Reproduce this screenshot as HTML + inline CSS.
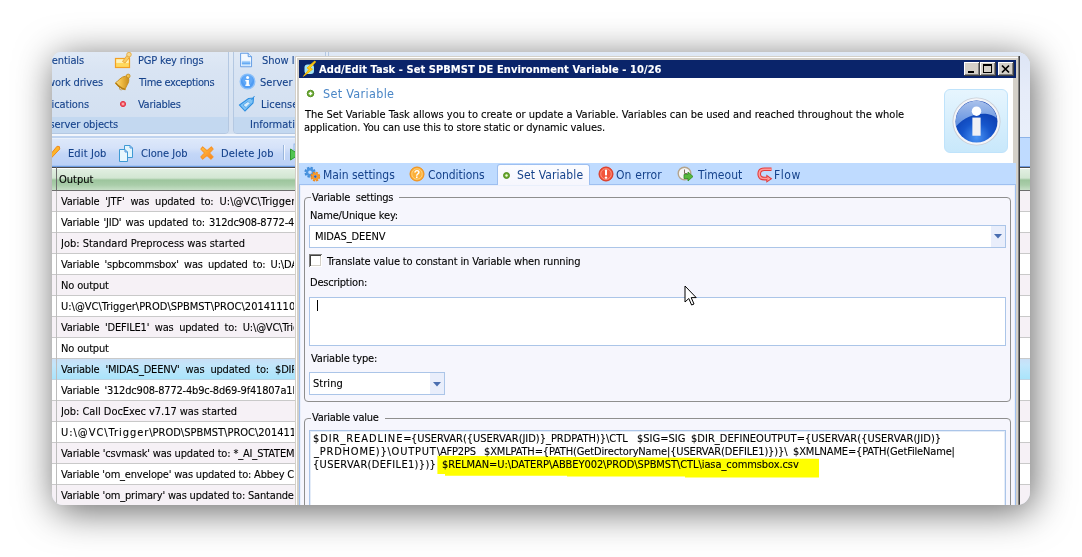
<!DOCTYPE html>
<html>
<head>
<meta charset="utf-8">
<title>Add/Edit Task - Set Variable</title>
<style>
html,body{margin:0;padding:0;background:#fff;}
body{width:1082px;height:557px;overflow:hidden;position:relative;
  font-family:"DejaVu Sans Condensed","Liberation Sans",sans-serif;font-size:11px;color:#000;}
*{box-sizing:border-box;}
.abs{position:absolute;}
.t{position:absolute;white-space:pre;line-height:16px;height:15px;-webkit-text-stroke:.1px currentColor;}
/* the screenshot card: abs origin (52,52) */
#shot{will-change:transform;position:absolute;left:52px;top:52px;width:978px;height:453px;border-radius:9px 14px 13px 11px;overflow:hidden;
  background:#dbe6f4;box-shadow:3px 6px 38px 0 rgba(0,0,0,.61);}
/* everything inside uses coords relative to shot: x-52, y-52 */
#ribbon{left:0;top:0;width:978px;height:82px;background:linear-gradient(#e3ebf6 0,#dbe6f4 20px,#d5e1f1 64px);}
.rgroup{position:absolute;top:-4px;height:86px;border:1px solid #b4c8e2;border-radius:4px;background:linear-gradient(#e1eaf6 0,#d9e4f3 22px,#d3e0f1 68px);}
.rlabel{position:absolute;left:0;right:0;bottom:0;height:16px;background:#c3d8f0;border-radius:0 0 3px 3px;}
.rb{color:#15428b;}
#tbar{left:0;top:86px;width:978px;height:29px;background:linear-gradient(#dde8fa 0,#d5e2f9 9px,#c3d6f7 15px,#bbd0f6 27px);border-top:1px solid #eaf1fb;border-bottom:1px solid #6e9be0;box-shadow:inset 0 -1px 0 #a9c6f2;}
#ghead{left:0;top:115px;width:978px;height:24px;border-top:1px solid #4c4c4c;border-bottom:1px solid #6d6d6d;
  background:linear-gradient(#fff 0,#fff 1px,#e2efe2 1px,#d2e6d2 10px,#9dc59d 12px,#a9cda9 17px,#c6dfc6 22px);}
.row{position:absolute;left:0;width:978px;height:21px;border-bottom:1px solid #c9c9c9;background:#fff;}
.row.alt{background:#f6f1f6;}
.row.sel{background:linear-gradient(#c9dff6 0,#c3e6fb 6px,#a9e4fb 20px);border-bottom-color:#c0d4e2;}
.row .t{left:9px;top:3px;width:233px;overflow:hidden;}
#colsep{left:4px;top:139px;width:1px;height:320px;background:#bcbcbc;}
/* dialog */
#dlg{left:243px;top:4px;width:725px;height:460px;background:#d4d0c8;border-left:1px solid #d4d0c8;border-top:1px solid #d4d0c8;
  box-shadow:inset 1px 1px 0 #fff;}
#title{left:247px;top:8px;width:717px;height:18px;background:#0a246a;color:#fff;font-weight:bold;}
.cbtn{position:absolute;top:2px;width:16px;height:14px;background:#d4d0c8;
  box-shadow:inset -1px -1px 0 #404040,inset 1px 1px 0 #fff,inset -2px -2px 0 #808080;}
#hdr{left:247px;top:26px;width:714px;height:85px;background:#fff;}
#tabs{left:247px;top:111px;width:717px;height:21px;background:#bfdbff;}
#page{left:247px;top:132px;width:717px;height:330px;background:#f6f6fd;border:1px solid #9ebff0;border-bottom:none;
  box-shadow:inset 1px 1px 0 #e9effb, inset -1px 0 0 #e9effb;}
#tabsel{left:445px;top:112px;width:93px;height:21px;background:linear-gradient(#fbfcff,#f6f6fd);border:1px solid #9ebff0;border-bottom:none;border-radius:3px 3px 0 0;}
.tab{color:#15428b;font-size:12px;margin-left:-1px;margin-top:0px;-webkit-text-stroke:0;}
.gb{position:absolute;border:1px solid #8e8e8e;border-radius:4px;}
.gbl{position:absolute;background:#f6f6fd;padding:0 0 0 0;}
.inp{position:absolute;background:#fff;border:1px solid #abc5e8;}
</style>
</head>
<body>
<div id="shot">
  <!-- ===== background application ===== -->
  <div id="ribbon" class="abs">
    <div class="rgroup" style="left:-12px;width:189px;"><div class="rlabel"></div></div>
    <div class="rgroup" style="left:181px;width:93px;"><div class="rlabel"></div></div>
    <div class="rgroup" style="left:276px;width:800px;"><div class="rlabel"></div></div>
    <span id="t1" class="t rb" style="right:946px;top:1px;letter-spacing:-.12px;">Credentials</span>
    <span id="t2" class="t rb" style="right:927px;top:23px;letter-spacing:-.12px;">Network drives</span>
    <span id="t3" class="t rb" style="right:941px;top:45px;letter-spacing:-.12px;">Notifications</span>
    <span id="t4" class="t rb" style="right:912px;top:65px;letter-spacing:-.12px;">Global server objects</span>
    <span id="t5" class="t rb" style="left:86px;top:1px;letter-spacing:-0.18px;">PGP key rings</span>
    <span id="t6" class="t rb" style="left:87px;top:23px;letter-spacing:-0.37px;">Time exceptions</span>
    <span id="t7" class="t rb" style="left:86px;top:45px;letter-spacing:-0.29px;">Variables</span>
    <span id="t8" class="t rb" style="left:210px;top:1px;">Show log</span>
    <span id="t9" class="t rb" style="left:208px;top:23px;">Server info</span>
    <span id="t10" class="t rb" style="left:209px;top:45px;">License</span>
    <span id="t11" class="t rb" style="left:198px;top:65px;">Information</span>
    <!-- icons -->
    <svg class="abs" style="left:62px;top:-1px" width="18" height="18" viewBox="0 0 18 18">
      <rect x="1.500" y="7.500" width="14" height="9" fill="#ffd95e" stroke="#f2a024" stroke-width="1.200"/>
      <rect x="2.300" y="8.300" width="12.400" height="3.600" fill="#fff3bc"/>
      <path d="M8.500 10.500 L13.200 4.200 L15.800 6 L11 12 Z" fill="#f8cc62" stroke="#e6a030" stroke-width=".8"/>
      <circle cx="15" cy="3.600" r="2.300" fill="#f6d88e" stroke="#e2a43a" stroke-width=".8"/>
    </svg>
    <svg class="abs" style="left:62px;top:21px" width="18" height="18" viewBox="0 0 18 18">
      <defs><linearGradient id="bg" x1="0" y1="0" x2="1" y2="0"><stop offset="0" stop-color="#fbe08a"/><stop offset=".45" stop-color="#f0bc44"/><stop offset="1" stop-color="#c98e1e"/></linearGradient></defs>
      <circle cx="7.200" cy="15" r="1.900" fill="#f6ecd2" stroke="#a88a4a" stroke-width=".7"/>
      <path d="M11.500 3.200 C7 3.500 4.500 8 1.200 10 C3.500 13.500 7.500 16 11.200 16.800 C11.500 13 16 10 14.500 5 Z" fill="url(#bg)" stroke="#c48a1a" stroke-width=".9" stroke-linejoin="round"/>
      <path d="M2 10.200 C4.500 13.500 7.500 15.300 10.800 16.200" fill="none" stroke="#b07a14" stroke-width="1.300"/>
      <circle cx="14.200" cy="3" r="1.900" fill="#f2c450" stroke="#c48a1a" stroke-width=".8"/>
    </svg>
    <svg class="abs" style="left:66px;top:47px" width="10" height="10" viewBox="0 0 10 10">
      <circle cx="5" cy="5" r="2.6" fill="#f2606c" stroke="#e23446" stroke-width="1"/>
      <circle cx="5" cy="5" r="1" fill="#fbb"/>
    </svg>
    <svg class="abs" style="left:187px;top:0px" width="15" height="16" viewBox="0 0 17 19">
      <path d="M1.5 1.5 H10.5 L14.5 5.5 V17.5 H1.5 Z" fill="#f4f9ff" stroke="#4f8fe0"/>
      <rect x="3" y="10.5" width="10" height="5.5" fill="#a9d2fb"/>
      <rect x="3" y="12.5" width="10" height="1.6" fill="#5ea6f2"/>
      <path d="M10.5 1.5 V5.5 H14.5" fill="#dcecff" stroke="#4f8fe0"/>
    </svg>
    <svg class="abs" style="left:187px;top:21px" width="17" height="17" viewBox="0 0 17 17">
      <circle cx="8.5" cy="8.5" r="7.3" fill="#4f9cf4" stroke="#8cc0fa" stroke-width="1.4"/>
      <circle cx="8.5" cy="6.5" r="5.2" fill="#6cb0fa" opacity=".6"/>
      <rect x="7.3" y="7" width="2.6" height="5.4" fill="#fff"/>
      <rect x="6.3" y="7" width="3" height="1.3" fill="#fff"/>
      <rect x="6.3" y="11.6" width="4.6" height="1.3" fill="#fff"/>
      <circle cx="8.6" cy="4.4" r="1.5" fill="#fff"/>
    </svg>
    <svg class="abs" style="left:186px;top:42px" width="19" height="19" viewBox="0 0 19 19">
      <path d="M1.5 11 L10.5 4.5 L15.5 4 L15 9 L7 17 Z" fill="#7ec3f6" stroke="#2f8fe0" stroke-width="1.1"/>
      <path d="M5 11 L10 7.5 L12 9.5 L8 13.5 Z" fill="#d8eefc" stroke="#3f97e4" stroke-width=".7"/>
      <path d="M13.5 6 L16.5 2" stroke="#2f8fe0" stroke-width="1"/>
    </svg>
  </div>
  <div class="abs" style="left:0;top:82px;width:978px;height:2px;background:#f2f6fc;"></div>
  <div class="abs" style="left:0;top:84px;width:978px;height:2px;background:#bfd3ef;"></div>
  <div id="tbar" class="abs">
    <span id="t12" class="t rb" style="left:16px;top:7px;letter-spacing:0.12px;">Edit Job</span>
    <span id="t13" class="t rb" style="left:89px;top:7px;">Clone Job</span>
    <span id="t14" class="t rb" style="left:169px;top:7px;letter-spacing:0.18px;">Delete Job</span>
    <div class="abs" style="left:231px;top:6px;width:1px;height:15px;background:#9ab6dc;box-shadow:1px 0 0 #f2f7fe;"></div>
    <svg class="abs" style="left:0px;top:-1px" width="12" height="24" viewBox="0 0 12 24">
      <path d="M-1 15.800 L5 8.300 L7.300 8.500 L7.800 11 L-1 20.300 Z" fill="#fdb528" stroke="#f08a1e" stroke-width="1" stroke-linejoin="round"/>
    </svg>
    <svg class="abs" style="left:66px;top:5px" width="17" height="19" viewBox="0 0 17 19">
      <path d="M6.5 1.5 H12 L14.5 4 V13.5 H6.5 Z" fill="#e2f5fc" stroke="#3f9ad4"/>
      <path d="M1.5 5.5 H7 L9.5 8 V17.5 H1.5 Z" fill="#e8f7fd" stroke="#3f9ad4"/>
      <path d="M7 5.5 V8 H9.5" fill="none" stroke="#4f93dc"/>
      <path d="M12 1.5 V4 H14.5" fill="none" stroke="#4f93dc"/>
    </svg>
    <svg class="abs" style="left:147.500px;top:7px" width="14" height="14" viewBox="0 0 16 16">
      <defs><linearGradient id="xg" x1="0" y1="0" x2="1" y2="1"><stop offset="0" stop-color="#ffc83c"/><stop offset=".5" stop-color="#fda22e"/><stop offset="1" stop-color="#f88420"/></linearGradient></defs>
      <path d="M3 1 L8 5.200 L13 1 L15 3.500 L10.800 8 L15 12.500 L12.500 15 L8 10.800 L3 15 L1 12.500 L5.200 8 L1 3.500 Z" fill="url(#xg)" stroke="#f79428" stroke-width="1.200" stroke-linejoin="round"/>
    </svg>
    <svg class="abs" style="left:237px;top:4px" width="12" height="20" viewBox="0 0 12 20">
      <path d="M1.5 6 L10 11.5 L1.5 17 Z" fill="#52c552" stroke="#2e9a2e"/>
      <rect x="5" y="1" width="6" height="6" fill="#cfe3fb" stroke="#86aee2" stroke-width=".8"/>
    </svg>
  </div>
  <div id="ghead" class="abs"><span id="t15" class="t" style="left:7px;top:4px;">Output</span></div>
  <div id="rows">
    <div class="row alt" style="top:139px"><span id="t16" class="t" style="word-spacing:3.016px;letter-spacing:-.2px;">Variable 'JTF' was updated to: <span style="letter-spacing:.08px">U:\@VC\Trigger</span>\PROD</span></div>
    <div class="row" style="top:160px"><span id="t17" class="t" style="letter-spacing:-.2px;word-spacing:1.178px;">Variable 'JID' was updated to: 312dc908-8772-4b9c</span></div>
    <div class="row alt" style="top:181px"><span id="t18" class="t" style="letter-spacing:-0.017px;">Job: Standard Preprocess was started</span></div>
    <div class="row" style="top:202px"><span id="t19" class="t" style="word-spacing:2.206px;letter-spacing:-.2px;">Variable 'spbcommsbox' was updated to: U:\DATERP</span></div>
    <div class="row alt" style="top:223px"><span id="t20" class="t" style="letter-spacing:-0.156px;">No output</span></div>
    <div class="row" style="top:244px"><span id="t21" class="t">U:\@VC\Trigger\PROD\SPBMST\PROC\20141110</span></div>
    <div class="row alt" style="top:265px"><span id="t22" class="t" style="word-spacing:2.680px;letter-spacing:-.2px;">Variable 'DEFILE1' was updated to: U:\@VC\Trigger</span></div>
    <div class="row" style="top:286px"><span id="t23" class="t" style="letter-spacing:-0.156px;">No output</span></div>
    <div class="row sel" style="top:307px"><span id="t24" class="t" style="word-spacing:3.171px;letter-spacing:-.2px;">Variable 'MIDAS_DEENV' was updated to: $DIR_READLINE</span></div>
    <div class="row" style="top:328px"><span id="t25" class="t" style="letter-spacing:-.2px;word-spacing:2.088px;">Variable '312dc908-8772-4b9c-8d69-9f41807a1b</span></div>
    <div class="row alt" style="top:349px"><span id="t26" class="t" style="letter-spacing:-0.050px;">Job: Call DocExec v7.17 was started</span></div>
    <div class="row" style="top:370px"><span id="t27" class="t"><span style="letter-spacing:.96px">U:\@VC\Trigger</span>\PROD\SPBMST\PROC\20141110</span></div>
    <div class="row alt" style="top:391px"><span id="t28" class="t" style="letter-spacing:-0.157px;">Variable 'csvmask' was updated to: *_AI_STATEMENT</span></div>
    <div class="row" style="top:412px"><span id="t29" class="t" style="letter-spacing:-0.202px;">Variable 'om_envelope' was updated to: Abbey C5</span></div>
    <div class="row alt" style="top:433px"><span id="t30" class="t" style="letter-spacing:-0.190px;">Variable 'om_primary' was updated to: Santander</span></div>
  </div>
  <div class="abs" style="left:968px;top:0;width:10px;height:85px;background:linear-gradient(#dde5f5,#e6ecf9 40px,#e9effa);"></div>
  <div class="abs" style="left:968px;top:85px;width:10px;height:30px;background:#bfdbff;border-top:1px solid #8eb4e8;border-bottom:1px solid #6e9be0;"></div>
  <div id="colsep" class="abs"></div>
  <div class="abs" style="left:4px;top:115px;width:1px;height:24px;background:#6d6d6d;"></div>
  <!-- ===== dialog ===== -->
  <div id="dlg" class="abs"></div>
  <div class="abs" style="left:966px;top:4px;width:1px;height:460px;background:#808080;"></div>
  <div class="abs" style="left:967px;top:4px;width:1px;height:460px;background:#404040;"></div>
  <div id="title" class="abs">
    <svg class="abs" style="left:2px;top:0px" width="16" height="18" viewBox="0 0 16 18">
      <rect x="3.500" y="4.500" width="9.500" height="9.500" rx="3" fill="#9fe0f4"/>
      <path d="M13.800 1 L6 8 L8.300 9 L2.500 16.300 L11.500 9.200 L9 8 L14.500 2 Z" fill="#ffd21e" stroke="#f4b800" stroke-width="1" stroke-linejoin="round"/>
    </svg>
    <span id="t31" class="t" style="left:20px;top:2px;letter-spacing:0.07px;">Add/Edit Task - Set SPBMST DE Environment Variable - 10/26</span>
    <div class="cbtn" style="left:665px;"><div class="abs" style="left:4px;top:9px;width:6px;height:2px;background:#000"></div></div>
    <div class="cbtn" style="left:681px;"><div class="abs" style="left:3px;top:2px;width:9px;height:9px;border:1px solid #000;border-top-width:2px"></div></div>
    <div class="cbtn" style="left:699px;"><svg class="abs" style="left:3px;top:2px" width="10" height="10" viewBox="0 0 10 10"><path d="M1 1.5 L8 8.5 M8 1.5 L1 8.5" stroke="#000" stroke-width="1.7"/></svg></div>
  </div>
  <div id="hdr" class="abs">
    <svg class="abs" style="left:6px;top:10px" width="11" height="11" viewBox="0 0 11 11">
      <circle cx="5.5" cy="5.5" r="3.3" fill="#6aa82e" stroke="#4c8a1c" stroke-width=".9"/>
      <path d="M5.5 3.700 V7.300 M3.700 5.500 H7.300" stroke="#fff" stroke-width="1.400"/>
    </svg>
    <span id="t32" class="t" style="left:24px;top:8px;font-size:12.5px;line-height:16px;height:16px;color:#4a86c6;letter-spacing:0.32px;-webkit-text-stroke:0;">Set Variable</span>
    <span id="t33" class="t" style="left:6px;top:29px;letter-spacing:-0.02px;">The Set Variable Task allows you to create or update a Variable. Variables can be used and reached throughout the whole</span>
    <span id="t34" class="t" style="left:5px;top:42px;letter-spacing:-0.13px;">application. You can use this to store static or dynamic values.</span>
    <!-- info icon -->
    <div class="abs" style="left:645px;top:11px;width:64px;height:64px;border-radius:6px;border:1px solid #bfe3fb;background:linear-gradient(#e6f5fe,#c8e8fb);"></div>
    <svg class="abs" style="left:651.500px;top:17.500px" width="51" height="51" viewBox="0 0 52 52">
      <defs>
        <radialGradient id="ig" cx="50%" cy="88%" r="70%"><stop offset="0" stop-color="#4a94f4"/><stop offset=".5" stop-color="#1656cc"/><stop offset="1" stop-color="#0c3cae"/></radialGradient>
        <linearGradient id="ih" x1="0" y1="0" x2="0" y2="1"><stop offset="0" stop-color="#c4d8f6"/><stop offset="1" stop-color="#6a9ae6"/></linearGradient>
      </defs>
      <circle cx="26" cy="26" r="24.500" fill="#c9ced6"/>
      <circle cx="26" cy="26" r="23.600" fill="#f4f5f8"/>
      <circle cx="26" cy="26" r="21.400" fill="url(#ig)"/>
      <path d="M5 29 A21 21 0 0 1 46.800 23 C40 15 18 16 5 31 Z" fill="url(#ih)" opacity=".85"/>
      <circle cx="26" cy="15.500" r="4.800" fill="#fff"/>
      <rect x="21.800" y="22" width="8.400" height="18.500" fill="#f0f0f4"/>
    </svg>
  </div>
  <div id="tabs" class="abs"></div>
  <div id="page" class="abs"></div>
  <div id="tabsel" class="abs"></div>
  <div id="tablabels" class="abs" style="left:247px;top:111px;width:717px;height:22px;">
    <span id="t35" class="t tab" style="left:25px;top:4px;letter-spacing:-0.04px;">Main settings</span>
    <span id="t36" class="t tab" style="left:130px;top:4px;letter-spacing:-0.06px;">Conditions</span>
    <span id="t37" class="t tab" style="left:219px;top:4px;letter-spacing:0.12px;">Set Variable</span>
    <span id="t38" class="t tab" style="left:318px;top:4px;letter-spacing:0.12px;">On error</span>
    <span id="t39" class="t tab" style="left:400px;top:4px;letter-spacing:0.03px;">Timeout</span>
    <span id="t40" class="t tab" style="left:476px;top:4px;letter-spacing:0.53px;">Flow</span>
    <!-- gear -->
    <svg class="abs" style="left:5px;top:3px" width="17" height="16" viewBox="0 0 17 16">
      <circle cx="6" cy="6.2" r="4.1" fill="none" stroke="#3f8ad8" stroke-width="3" stroke-dasharray="2.1 1.12"/>
      <circle cx="6" cy="6.2" r="3" fill="none" stroke="#4a94e0" stroke-width="2.4"/>
      <circle cx="11.300" cy="10.600" r="3.500" fill="none" stroke="#f08a1c" stroke-width="2.800" stroke-dasharray="1.900 .85"/>
      <circle cx="11.300" cy="10.600" r="2.500" fill="none" stroke="#f59a2c" stroke-width="2.200"/>
      <circle cx="11.300" cy="10.600" r="1.300" fill="#2f62b8"/>
    </svg>
    <!-- question -->
    <svg class="abs" style="left:110px;top:3px" width="16" height="16" viewBox="0 0 16 16">
      <circle cx="8" cy="8" r="7" fill="#fbb03a" stroke="#f08c14" stroke-width="1"/>
      <circle cx="8" cy="8" r="5.2" fill="none" stroke="#fdd58c" stroke-width=".8"/>
      <text x="8" y="12" font-family="Liberation Sans, sans-serif" font-weight="bold" font-size="10.5" text-anchor="middle" fill="#fff">?</text>
    </svg>
    <!-- green dot -->
    <svg class="abs" style="left:203px;top:8px" width="9" height="9" viewBox="0 0 9 9">
      <circle cx="4.5" cy="4.5" r="3" fill="#6aa82e" stroke="#4c8a1c" stroke-width=".9"/>
      <circle cx="4.500" cy="4.500" r="1.200" fill="#f4ffe0"/>
    </svg>
    <!-- error -->
    <svg class="abs" style="left:299px;top:3px" width="16" height="16" viewBox="0 0 16 16">
      <circle cx="8" cy="8" r="7" fill="#f2553c" stroke="#d8341e" stroke-width="1"/>
      <circle cx="8" cy="8" r="5.300" fill="none" stroke="#f9a090" stroke-width=".8"/>
      <rect x="7" y="3.500" width="2" height="6" rx=".8" fill="#fff"/>
      <circle cx="8" cy="11.600" r="1.200" fill="#fff"/>
    </svg>
    <!-- timeout -->
    <svg class="abs" style="left:378px;top:3px" width="17" height="17" viewBox="0 0 17 17">
      <circle cx="7.500" cy="7.500" r="6.300" fill="#f4f4f4" stroke="#b4a48c" stroke-width="1.400"/>
      <path d="M7.500 3.500 V7.500 H10.500" stroke="#7d6f5c" stroke-width="1" fill="none"/>
      <path d="M7 8.500 H11 V6 L16 10.500 L11 15 V12.500 H7 Z" fill="#58b83c" stroke="#2f8c1e" stroke-width=".8"/>
    </svg>
    <!-- flow -->
    <svg class="abs" style="left:458px;top:3px" width="16" height="17" viewBox="0 0 16 17">
      <path d="M14.500 3.200 H7.500 C3.500 3.200 2.200 5.300 2.200 8 C2.200 10.800 3.700 12.600 7.500 12.600 H10" fill="none" stroke="#e23a3a" stroke-width="3.600"/>
      <path d="M9.300 8.600 L15.300 12.800 L9.300 16.800 Z" fill="#e23a3a"/>
      <path d="M14.500 3.200 H7.500 C3.500 3.200 2.200 5.300 2.200 8 C2.200 10.800 3.700 12.600 7.500 12.600 H10.500" fill="none" stroke="#ff9a9a" stroke-width="1.500"/>
      <path d="M10.300 10.600 L13.500 12.800 L10.300 14.900 Z" fill="#ff9a9a"/>
    </svg>
  </div>
  <div id="form" class="abs" style="left:247px;top:132px;width:717px;height:330px;">
    <div class="gb" style="left:5px;top:13px;width:707px;height:205px;"></div>
    <span id="t41" class="t gbl" style="left:12px;top:6px;padding:0 6px 0 1px;letter-spacing:-0.25px;">Variable  settings</span>
    <span id="t42" class="t" style="left:11px;top:24px;letter-spacing:-0.15px;">Name/Unique key:</span>
    <div class="inp" style="left:10px;top:41px;width:697px;height:23px;">
      <span id="t43" class="t" style="left:5px;top:3px;letter-spacing:-0.06px;">MIDAS_DEENV</span>
      <div class="abs" style="right:0;top:0;width:14px;height:21px;background:#e9eefb;"></div>
      <svg class="abs" style="right:3px;top:8px" width="8" height="5" viewBox="0 0 8 5"><path d="M0 0 H8 L4 4.500 Z" fill="#4a6eb0"/></svg>
    </div>
    <div class="abs" style="left:10px;top:70px;width:13px;height:13px;background:#fff;box-shadow:inset 1px 1px 0 #808080,inset -1px -1px 0 #fff,inset 2px 2px 0 #404040,inset -2px -2px 0 #d4d0c8;"></div>
    <span id="t44" class="t" style="left:28px;top:70px;letter-spacing:-0.14px;">Translate value to constant in Variable when running</span>
    <span id="t45" class="t" style="left:11px;top:91px;letter-spacing:-0.22px;">Description:</span>
    <div class="inp" style="left:10px;top:113px;width:697px;height:49px;">
      <div class="abs" style="left:7px;top:2px;width:1px;height:11px;background:#000;"></div>
    </div>
    <span id="t46" class="t" style="left:12px;top:167px;letter-spacing:-0.17px;">Variable type:</span>
    <div class="inp" style="left:10px;top:188px;width:136px;height:23px;">
      <span id="t47" class="t" style="left:3px;top:3px;letter-spacing:0.04px;">String</span>
      <div class="abs" style="right:0;top:0;width:14px;height:21px;background:#e9eefb;"></div>
      <svg class="abs" style="right:3px;top:9px" width="8" height="5" viewBox="0 0 8 5"><path d="M0 0 H8 L4 4.500 Z" fill="#4a6eb0"/></svg>
    </div>
    <div class="gb" style="left:5px;top:234px;width:707px;height:120px;"></div>
    <span id="t48" class="t gbl" style="left:12px;top:226px;padding:0 6px 0 1px;letter-spacing:-0.26px;">Variable value</span>
    <div class="inp" style="left:10px;top:246px;width:697px;height:100px;box-shadow:inset 0 0 0 1px #e4ecf8;">
      <svg class="abs" style="left:0;top:0" width="695" height="98" viewBox="310 431 695 98">
        <path d="M437.4 455.8 L560 456.4 L560 457.1 L700 457.8 L700 458.5 L819 458.7 L819 477.6 L685 477.6 L685 476.5 L567 476.6 L567 475.7 L445 475.7 L445 474 L437.4 474 Z" fill="#ffff00"/>
      </svg>
      <span id="v1a" class="t" style="left:3px;top:0px;letter-spacing:0.93px;">$DIR_READLINE=</span>
      <span id="v1b" class="t" style="left:101px;top:0px;letter-spacing:-0.02px;">{USERVAR({USERVAR(JID)}_PRDPATH)}\CTL</span>
      <span id="v1c" class="t" style="left:327px;top:0px;">$SIG=SIG</span>
      <span id="v1d" class="t" style="left:381px;top:0px;letter-spacing:0.03px;">$DIR_DEFINEOUTPUT={USERVAR({USERVAR(JID)}</span>
      <span id="v2a" class="t" style="left:4px;top:13px;letter-spacing:0.79px;">_PRDHOME)}\OUTPUT\</span>
      <span id="v2b" class="t" style="left:130px;top:13px;letter-spacing:-0.2px;">AFP2PS</span>
      <span id="v2c" class="t" style="left:174px;top:13px;letter-spacing:-0.14px;">$XMLPATH={PATH(GetDirectoryName|{USERVAR(DEFILE1)})}\</span>
      <span id="v2d" class="t" style="left:483px;top:13px;letter-spacing:-0.15px;">$XMLNAME={PATH(GetFileName|</span>
      <span id="v3a" class="t" style="left:3px;top:26px;letter-spacing:0.32px;">{USERVAR(DEFILE1)})}</span>
      <span id="v3b" class="t" style="left:132px;top:26px;letter-spacing:-0.08px;">$RELMAN=U:\DATERP\ABBEY002\PROD\SPBMST\CTL\iasa_commsbox.csv</span>
    </div>
  </div>
  <!-- mouse cursor -->
  <svg class="abs" style="left:632px;top:233px" width="14" height="22" viewBox="0 0 14 22">
    <path d="M1 1 V17 L4.800 13.500 L7.600 20 L10 19 L7.200 12.600 H12.200 Z" fill="#fff" stroke="#000" stroke-width="1"/>
  </svg>
</div>
</body>
</html>
